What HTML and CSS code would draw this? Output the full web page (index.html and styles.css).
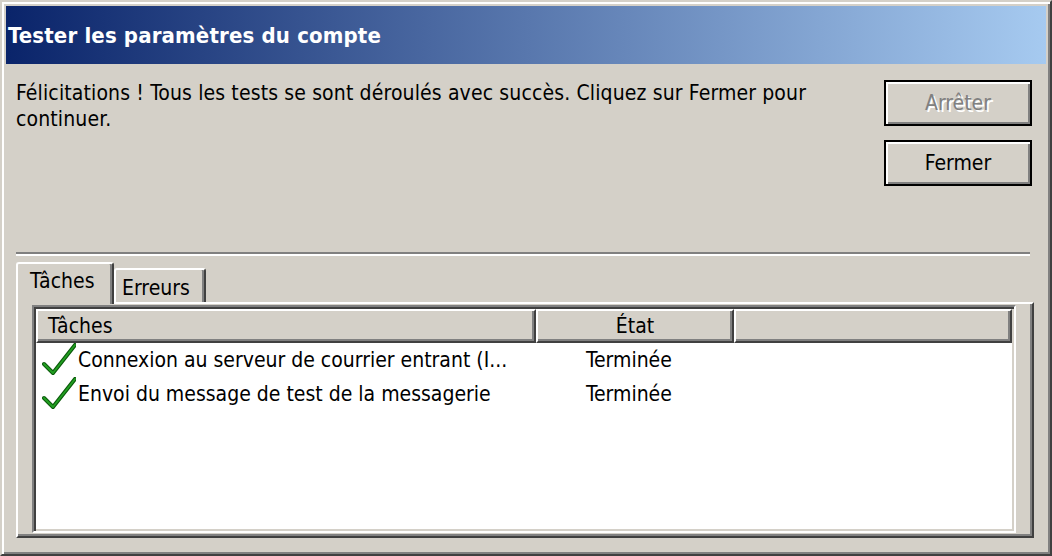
FILE: index.html
```html
<!DOCTYPE html>
<html lang="fr">
<head>
<meta charset="utf-8">
<title>Tester les paramètres du compte</title>
<link rel="stylesheet" href="styles.css">
</head>
<body>
<div class="window">
  <div class="titlebar"><span class="title">Tester les paramètres du compte</span></div>
  <div class="content">
    <div class="top">
      <p class="message">Félicitations ! Tous les tests se sont déroulés avec succès. Cliquez sur Fermer pour<br>continuer.</p>
      <div class="buttons">
        <button class="btn disabled" type="button">Arrêter</button>
        <button class="btn" type="button">Fermer</button>
      </div>
    </div>
    <div class="separator"></div>
    <div class="tabs">
      <div class="tab active">Tâches</div>
      <div class="tab">Erreurs</div>
    </div>
    <div class="panel">
      <div class="listbox">
        <div class="header">
          <div class="hcell col1">Tâches</div>
          <div class="hcell col2">État</div>
          <div class="hcell col3"></div>
        </div>
        <div class="row">
          <svg class="check" viewBox="0 0 34 34" width="34" height="34"><path d="M2 21 L11 30 L33 2" fill="none" stroke="#0b5a0b" stroke-width="4" stroke-linecap="round" stroke-linejoin="round"/><path d="M2 21 L11 30 L33 2" fill="none" stroke="#22a022" stroke-width="1.8" stroke-linecap="round" stroke-linejoin="round"/></svg>
          <span class="cell-task">Connexion au serveur de courrier entrant (I...</span>
          <span class="cell-state">Terminée</span>
        </div>
        <div class="row">
          <svg class="check" viewBox="0 0 34 34" width="34" height="34"><path d="M2 21 L11 30 L33 2" fill="none" stroke="#0b5a0b" stroke-width="4" stroke-linecap="round" stroke-linejoin="round"/><path d="M2 21 L11 30 L33 2" fill="none" stroke="#22a022" stroke-width="1.8" stroke-linecap="round" stroke-linejoin="round"/></svg>
          <span class="cell-task">Envoi du message de test de la messagerie</span>
          <span class="cell-state">Terminée</span>
        </div>
      </div>
    </div>
  </div>
</div>
</body>
</html>
```

FILE: styles.css
```css
html, body {
  margin: 0;
  padding: 0;
  background: #d4d0c8;
}

body {
  font-family: "DejaVu Sans Condensed", "DejaVu Sans", sans-serif;
  font-stretch: condensed;
  font-size: 21px;
  color: #000;
}

.window {
  width: 1052px;
  height: 556px;
  box-sizing: border-box;
  background: #d4d0c8;
  border: 2px solid;
  border-color: #d4d0c8 #404040 #404040 #d4d0c8;
  box-shadow: inset 2px 2px 0 #fff, inset -2px -2px 0 #808080;
  padding: 4px;
  display: flex;
  flex-direction: column;
}

.titlebar {
  height: 58px;
  flex: none;
  background: linear-gradient(to right, #0a246a, #a6caf0);
  display: flex;
  align-items: center;
  padding-left: 2px;
}

.title {
  color: #fff;
  font-weight: bold;
  font-size: 22px;
  letter-spacing: 0.15px;
}

.content {
  flex: 1;
  display: flex;
  flex-direction: column;
  padding: 0 12px 12px 10px;
}

.top {
  height: 188px;
  box-sizing: border-box;
  padding-top: 16px;
  display: flex;
  justify-content: space-between;
  align-items: flex-start;
}

.message {
  margin: 0;
  line-height: 26px;
  white-space: nowrap;
  letter-spacing: 0.13px;
}

.buttons {
  display: flex;
  flex-direction: column;
  gap: 14px;
  margin-right: 2px;
}

.btn {
  width: 148px;
  height: 46px;
  box-sizing: border-box;
  border: 2px solid #000;
  background: #d4d0c8;
  box-shadow: inset 2px 2px 0 #fff, inset -2px -2px 0 #808080;
  font-family: inherit;
  font-stretch: condensed;
  font-size: 21px;
  color: #000;
  padding: 0;
}

.btn.disabled {
  color: #808080;
  text-shadow: 2px 2px 0 #fff;
}

.separator {
  height: 0;
  border-top: 2px solid #808080;
  border-bottom: 2px solid #fff;
  margin-right: 4px;
}

.tabs {
  margin-top: 6px;
  height: 40px;
  display: flex;
  align-items: flex-end;
}

.tab {
  box-sizing: border-box;
  height: 34px;
  width: 92px;
  border-top: 2px solid #fff;
  border-left: 2px solid #fff;
  border-right: 2px solid #404040;
  box-shadow: inset -2px 0 0 #808080;
  border-top-left-radius: 3px;
  border-top-right-radius: 3px;
  padding: 5px 0 0 6px;
  line-height: 26px;
  background: #d4d0c8;
}

.tab.active {
  position: relative;
  z-index: 1;
  width: 98px;
  height: 42px;
  margin-bottom: -2px;
  padding: 4px 0 0 12px;
}

.panel {
  flex: 1;
  box-sizing: border-box;
  border-top: 2px solid #fff;
  border-left: 2px solid #fff;
  border-right: 2px solid #404040;
  border-bottom: 2px solid #404040;
  box-shadow: inset -2px -2px 0 #808080;
  padding: 1px 16px 0 14px;
}

.listbox {
  height: 228px;
  box-sizing: border-box;
  border: 2px solid;
  border-color: #808080 #fff #fff #808080;
  box-shadow: inset 2px 2px 0 #404040, inset -2px -2px 0 #d4d0c8;
  background: #fff;
  padding: 2px;
}

.header {
  display: flex;
  height: 34px;
}

.hcell {
  box-sizing: border-box;
  height: 34px;
  background: #d4d0c8;
  border-top: 2px solid #fff;
  border-left: 2px solid #fff;
  border-right: 2px solid #404040;
  border-bottom: 2px solid #404040;
  box-shadow: inset -2px -2px 0 #808080;
  line-height: 26px;
  padding: 2px 0 0 10px;
}

.col1 { width: 500px; }
.col2 { width: 198px; text-align: center; padding-left: 0; }
.col3 { flex: 1; }

.row {
  display: flex;
  align-items: center;
  height: 34px;
  line-height: 26px;
}

.check {
  flex: none;
  margin-left: 6px;
  margin-right: 2px;
}

.cell-task {
  width: 458px;
  white-space: nowrap;
  overflow: hidden;
}

.cell-state {
  padding-left: 50px;
}
```
